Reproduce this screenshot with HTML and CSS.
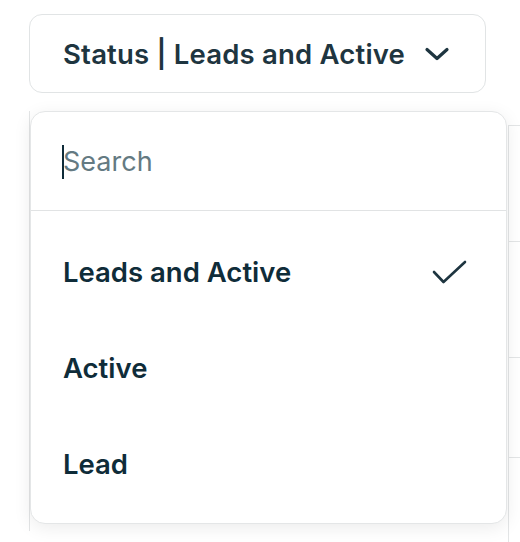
FILE: index.html
```html
<!DOCTYPE html>
<html>
<head>
    <meta name="viewport" content="width=device-width, initial-scale=1.0">
    <link rel="stylesheet" href="styles.css">
</head>
<body>
    <div class="page">
        <button class="status-btn">
            <span class="status-label">Status | Leads and Active</span>
            <svg class="chevron" width="26" height="16" viewBox="0 0 26 16" fill="none">
                <path d="M3 3.5l10 9 10-9" stroke="#1e3540" stroke-width="3.2" stroke-linecap="round" stroke-linejoin="round"/>
            </svg>
        </button>

        <div class="table-bg">
            <div class="table-row"></div>
            <div class="table-row"></div>
            <div class="table-row"></div>
            <div class="table-row"></div>
        </div>

        <div class="dropdown">
            <div class="search-box">
                <span class="caret"></span>
                <input class="search-input" type="text" placeholder="Search">
            </div>
            <ul class="options">
                <li class="option selected">
                    <span>Leads and Active</span>
                    <svg class="check" width="40" height="32" viewBox="0 0 40 32" fill="none">
                        <path d="M4 16l9.5 10L35 6" stroke="#1e3540" stroke-width="2.6" stroke-linecap="round" stroke-linejoin="round"/>
                    </svg>
                </li>
                <li class="option"><span>Active</span></li>
                <li class="option"><span>Lead</span></li>
            </ul>
        </div>
    </div>
</body>
</html>
```

FILE: styles.css
```css
* {
    margin: 0;
    padding: 0;
    box-sizing: border-box;
}

html, body {
    width: 100%;
    height: 100%;
    overflow: hidden;
    background: #fff;
}

body {
    font-family: Inter, "Noto Sans", sans-serif;
    color: #0f2c39;
}

.page {
    position: relative;
    height: 542px;
    overflow: hidden;
    padding: 14px 0 0 29px;
}

.status-btn {
    display: flex;
    align-items: center;
    gap: 19px;
    width: 457px;
    height: 79px;
    padding: 0 30px 0 33px;
    background: #fff;
    border: 1.5px solid #e1e4e5;
    border-radius: 13px;
    font-family: inherit;
    cursor: pointer;
}

.status-label {
    font-size: 27.5px;
    font-weight: 600;
    letter-spacing: 0.2px;
    color: #1e3540;
    white-space: nowrap;
}

/* table that sits behind the open menu */
.table-bg {
    margin-top: 18px;
    height: 420px;
    border-left: 1.5px solid #e3e5e6;
    padding-top: 14px;
}

.table-row {
    margin-left: 478px;
    height: 116px;
    border-top: 1.5px solid #e3e5e6;
    border-left: 1.5px solid #e3e5e6;
}

.table-row:nth-child(3) {
    height: 100px;
}

.dropdown {
    position: absolute;
    top: 111px;
    left: 30px;
    width: 477px;
    height: 413px;
    background: #fff;
    border: 1.5px solid #e4e6e7;
    border-radius: 15px;
    box-shadow: 0 4px 18px rgba(0, 0, 0, 0.08);
    overflow: hidden;
}

.search-box {
    position: relative;
    height: 99px;
    display: flex;
    align-items: center;
    padding: 0 32px;
    border-bottom: 1.5px solid #e1e3e4;
}

.caret {
    position: absolute;
    left: 31px;
    top: 33px;
    width: 2px;
    height: 34px;
    background: #0f2c39;
}

.search-input {
    border: none;
    outline: none;
    width: 100%;
    font-family: inherit;
    font-size: 27px;
    color: #0f2c39;
    background: transparent;
}

.search-input::placeholder {
    color: #647a82;
}

.options {
    list-style: none;
    padding-top: 13px;
}

.option {
    height: 96px;
    display: flex;
    align-items: center;
    justify-content: space-between;
    padding: 0 36px 0 32px;
    font-size: 27.5px;
    font-weight: 600;
    color: #0f2c39;
}
```
